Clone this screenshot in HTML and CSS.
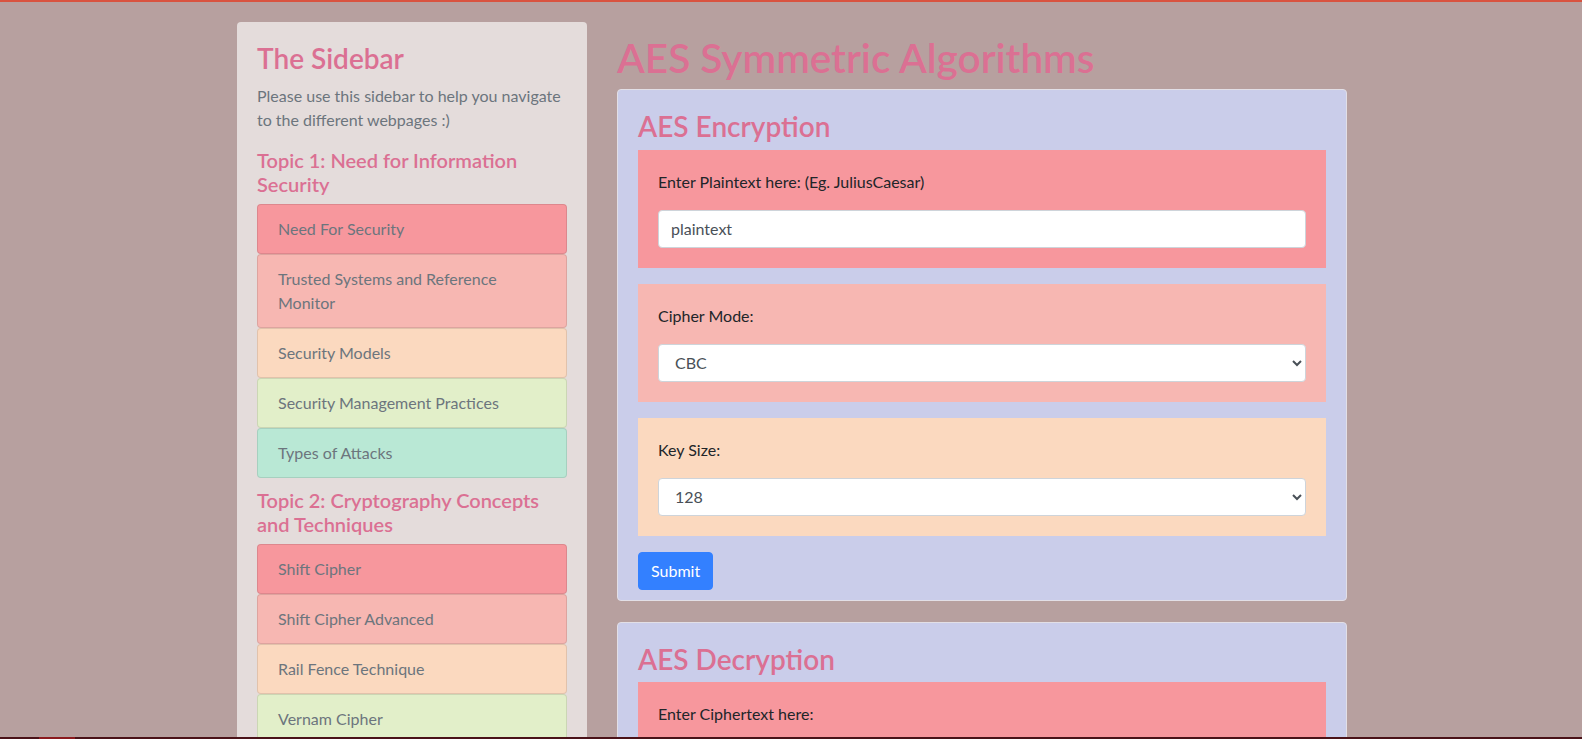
FILE: index.html
```html
<!DOCTYPE html>
<html lang="en">
<head>
<meta charset="utf-8">
<title>AES Symmetric Algorithms</title>
<link rel="stylesheet" href="styles.css">
</head>
<body>
<div class="topline"></div>
<div class="viewport">
  <div class="container">
    <aside class="sidebar">
      <h3 class="side-title">The Sidebar</h3>
      <p class="side-intro">Please use this sidebar to help you navigate to the different webpages :)</p>
      <h5 class="topic">Topic 1: Need for Information Security</h5>
      <ul class="links">
        <li class="link c1">Need For Security</li>
        <li class="link c2">Trusted Systems and Reference Monitor</li>
        <li class="link c3">Security Models</li>
        <li class="link c4">Security Management Practices</li>
        <li class="link c5">Types of Attacks</li>
      </ul>
      <h5 class="topic">Topic 2: Cryptography Concepts and Techniques</h5>
      <ul class="links">
        <li class="link c1">Shift Cipher</li>
        <li class="link c2">Shift Cipher Advanced</li>
        <li class="link c3">Rail Fence Technique</li>
        <li class="link c4">Vernam Cipher</li>
        <li class="link c5">Playfair Cipher</li>
      </ul>
    </aside>
    <main class="main">
      <h1 class="page-title">AES Symmetric Algorithms</h1>
      <section class="card">
        <h3 class="card-title">AES Encryption</h3>
        <div class="group g1">
          <label class="label">Enter Plaintext here: (Eg. JuliusCaesar)</label>
          <input class="control" type="text" value="plaintext">
        </div>
        <div class="group g2">
          <label class="label">Cipher Mode:</label>
          <select class="control">
            <option>CBC</option>
            <option>ECB</option>
          </select>
        </div>
        <div class="group g3">
          <label class="label">Key Size:</label>
          <select class="control">
            <option>128</option>
            <option>192</option>
            <option>256</option>
          </select>
        </div>
        <button class="btn" type="button">Submit</button>
      </section>
      <section class="card">
        <h3 class="card-title">AES Decryption</h3>
        <div class="group g1">
          <label class="label">Enter Ciphertext here:</label>
          <input class="control" type="text" value="ciphertext">
        </div>
      </section>
    </main>
  </div>
</div>
<div class="bottombar"><span class="bottom-accent"></span></div>
</body>
</html>
```

FILE: styles.css
```css
* { box-sizing: border-box; }

html, body {
  margin: 0;
  padding: 0;
}

body {
  background: #b7a09f;
  font-family: Lato, "Open Sans", sans-serif;
  font-size: 16px;
  line-height: 1.5;
  color: #212529;
}

.topline {
  height: 2px;
  background: #d95340;
}

.viewport {
  height: 737px;
  overflow: hidden;
}

.container {
  width: 1140px;
  margin: 0 auto;
  padding: 0 14px 0 16px;
  display: flex;
  gap: 30px;
  align-items: flex-start;
}

.sidebar {
  width: 350px;
  flex: none;
  margin-top: 20px;
  background: #e4dcdb;
  border-radius: 4px;
  padding: 20px;
}

.side-title {
  margin: 0 0 8px;
  font-size: 28px;
  line-height: 1.2;
  font-weight: 600;
  color: #db7093;
}

.side-intro {
  margin: 0 0 16px;
  color: #6c757d;
}

.topic {
  margin: 0 0 8px;
  font-size: 20px;
  line-height: 1.2;
  font-weight: 600;
  color: #db7093;
}

.links {
  list-style: none;
  margin: 0 0 10px;
  padding: 0;
  display: flex;
  flex-direction: column;
}

.link {
  padding: 12px 19px 12px 20px;
  border: 1px solid rgba(0, 0, 0, 0.1);
  border-radius: 4px;
  color: #6c757d;
}

.c1 { background: #f7979d; }
.c2 { background: #f7b7b2; }
.c3 { background: #fbd9bf; }
.c4 { background: #e2efc9; }
.c5 { background: #b9e8d5; }

.main {
  width: 730px;
  flex: none;
  padding-top: 32px;
}

.page-title {
  margin: 0 0 7px;
  font-size: 40.5px;
  line-height: 48px;
  font-weight: 600;
  color: #db7093;
}

.card {
  background: #cacdea;
  border: 1px solid #e2dfe6;
  border-radius: 4px;
  padding: 20px 20px 10px;
  margin-bottom: 21px;
}

.card-title {
  margin: 0 0 6px;
  font-size: 28px;
  line-height: 1.2;
  font-weight: 600;
  color: #db7093;
}

.group {
  padding: 20px;
  margin-bottom: 16px;
  display: flex;
  flex-direction: column;
}

.g1 { background: #f7979d; }
.g2 { background: #f7b7b2; }
.g3 { background: #fbd9bf; }

.label {
  margin-bottom: 16px;
  color: #212529;
}

.control {
  height: 38px;
  width: 100%;
  padding: 6px 12px;
  font-family: inherit;
  font-size: 16px;
  color: #495057;
  background-color: #fff;
  border: 1px solid #ced4da;
  border-radius: 4px;
}

.btn {
  height: 38px;
  padding: 6px 12px;
  font-family: inherit;
  font-size: 16px;
  color: #fff;
  background: #3380ff;
  border: 1px solid #3380ff;
  border-radius: 4px;
}

.bottombar {
  position: fixed;
  left: 0;
  right: 0;
  bottom: 0;
  height: 2px;
  background: #4a1218;
}

.bottom-accent {
  position: absolute;
  left: 39px;
  width: 36px;
  top: 0;
  bottom: 0;
  background: #8b1a1e;
}
```
